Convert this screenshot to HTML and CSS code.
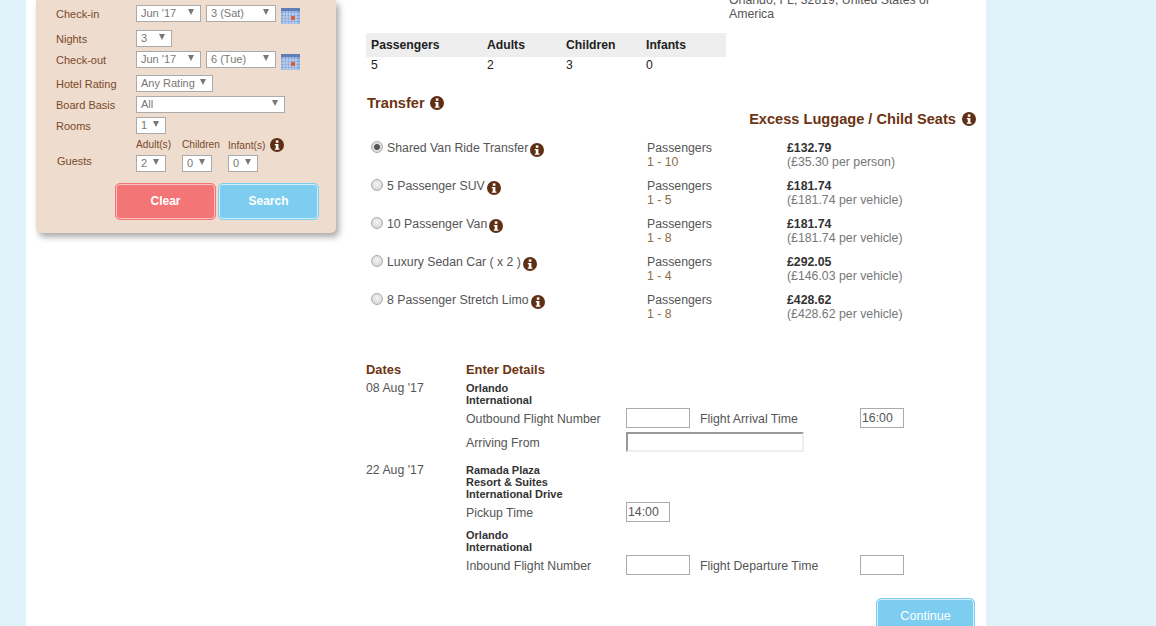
FILE: index.html
```html
<!DOCTYPE html>
<html lang="en">
<head>
  <meta charset="UTF-8">
  <title>Transfer</title>
  <link rel="stylesheet" href="styles.css">
</head>
<body>
<svg class="defs" width="0" height="0">
  <symbol id="info" viewBox="0 0 14 14">
    <circle cx="7" cy="7" r="7" fill="#5f2f14"/>
    <rect x="5.8" y="2.4" width="2.6" height="2.4" fill="#fff"/>
    <path d="M4.8 5.9h3.6v4.5h1v1.4H4.8v-1.4h1V7.3h-1z" fill="#fff"/>
  </symbol>
  <symbol id="cal" viewBox="0 0 19 16">
    <rect x="0" y="1" width="19" height="15" fill="#7f9fd8"/>
    <rect x="0" y="0" width="19" height="3" fill="#5f7fb4"/>
    <path d="M0 6h19M0 9h19M0 12h19M0 15h19M3 3v13M6 3v13M9 3v13M12 3v13M15 3v13" stroke="#c5d6ef" stroke-width="1"/>
    <rect x="10" y="8" width="4" height="4" fill="#d9603c"/>
  </symbol>
</svg>

<div class="wrap">
  <div class="side">
    <div class="panel">
      <div class="row r25">
        <label>Check-in</label>
        <span class="sel w65">Jun '17</span>
        <span class="sel w70">3 (Sat)</span>
        <svg class="cal"><use href="#cal"/></svg>
      </div>
      <div class="row r21">
        <label>Nights</label>
        <span class="sel w36">3</span>
      </div>
      <div class="row r24">
        <label>Check-out</label>
        <span class="sel w65">Jun '17</span>
        <span class="sel w70">6 (Tue)</span>
        <svg class="cal"><use href="#cal"/></svg>
      </div>
      <div class="row r21">
        <label>Hotel Rating</label>
        <span class="sel w77">Any Rating</span>
      </div>
      <div class="row r21">
        <label>Board Basis</label>
        <span class="sel w149">All</span>
      </div>
      <div class="row r21">
        <label>Rooms</label>
        <span class="sel w30">1</span>
      </div>
      <div class="guests">
        <label>Guests</label>
        <div class="guest-col">
          <small>Adult(s)</small>
          <span class="sel w30">2</span>
        </div>
        <div class="guest-col">
          <small>Children</small>
          <span class="sel w30">0</span>
        </div>
        <div class="guest-col">
          <small class="inf">Infant(s) <svg class="info i13"><use href="#info"/></svg></small>
          <span class="sel w30">0</span>
        </div>
      </div>
      <div class="btns">
        <button class="btn red">Clear</button>
        <button class="btn blue">Search</button>
      </div>
    </div>
  </div>

  <div class="main">
    <div class="top">
      <table class="pax">
        <tr><th>Passengers</th><th>Adults</th><th>Children</th><th>Infants</th></tr>
        <tr><td>5</td><td>2</td><td>3</td><td>0</td></tr>
      </table>
      <p class="addr">Orlando, FL, 32819, United States of America</p>
    </div>

    <h2 class="h-transfer">Transfer <svg class="info"><use href="#info"/></svg></h2>
    <h2 class="h-extra">Excess Luggage / Child Seats <svg class="info"><use href="#info"/></svg></h2>

    <div class="opts">
      <div class="opt">
        <div class="opt-name"><input type="radio" name="t" checked><span>Shared Van Ride Transfer</span> <svg class="info"><use href="#info"/></svg></div>
        <div class="opt-pax">Passengers<br><em>1 - 10</em></div>
        <div class="opt-price"><b>£132.79</b><br>(£35.30 per person)</div>
      </div>
      <div class="opt">
        <div class="opt-name"><input type="radio" name="t"><span>5 Passenger SUV</span> <svg class="info"><use href="#info"/></svg></div>
        <div class="opt-pax">Passengers<br><em>1 - 5</em></div>
        <div class="opt-price"><b>£181.74</b><br>(£181.74 per vehicle)</div>
      </div>
      <div class="opt">
        <div class="opt-name"><input type="radio" name="t"><span>10 Passenger Van</span> <svg class="info"><use href="#info"/></svg></div>
        <div class="opt-pax">Passengers<br><em>1 - 8</em></div>
        <div class="opt-price"><b>£181.74</b><br>(£181.74 per vehicle)</div>
      </div>
      <div class="opt">
        <div class="opt-name"><input type="radio" name="t"><span>Luxury Sedan Car ( x 2 )</span> <svg class="info"><use href="#info"/></svg></div>
        <div class="opt-pax">Passengers<br><em>1 - 4</em></div>
        <div class="opt-price"><b>£292.05</b><br>(£146.03 per vehicle)</div>
      </div>
      <div class="opt">
        <div class="opt-name"><input type="radio" name="t"><span>8 Passenger Stretch Limo</span> <svg class="info"><use href="#info"/></svg></div>
        <div class="opt-pax">Passengers<br><em>1 - 8</em></div>
        <div class="opt-price"><b>£428.62</b><br>(£428.62 per vehicle)</div>
      </div>
    </div>

    <div class="det-head"><span>Dates</span><span>Enter Details</span></div>

    <div class="det">
      <div class="det-date">08 Aug '17</div>
      <div class="det-body">
        <div class="place">Orlando<br>International</div>
        <div class="field">
          <label>Outbound Flight Number</label><input class="in64" type="text">
          <label class="second">Flight Arrival Time</label><input class="in44" type="text" value="16:00">
        </div>
        <div class="field">
          <label>Arriving From</label><input class="in178" type="text">
        </div>
      </div>
    </div>

    <div class="det det2">
      <div class="det-date">22 Aug '17</div>
      <div class="det-body">
        <div class="place">Ramada Plaza<br>Resort &amp; Suites<br>International Drive</div>
        <div class="field">
          <label>Pickup Time</label><input class="in44" type="text" value="14:00">
        </div>
        <div class="place p2">Orlando<br>International</div>
        <div class="field">
          <label>Inbound Flight Number</label><input class="in64" type="text">
          <label class="second">Flight Departure Time</label><input class="in44" type="text">
        </div>
      </div>
    </div>

    <div class="foot"><button class="btn blue cont">Continue</button></div>
  </div>
</div>
</body>
</html>
```

FILE: styles.css
```css
html, body {
  margin: 0;
  height: 626px;
  overflow: hidden;
}
body {
  background: #e0f3fb;
  font-family: "Liberation Sans", Arial, sans-serif;
  font-size: 12.3px;
  color: #555;
}
.defs {
  position: absolute;
}
.wrap {
  display: flex;
  width: 960px;
  height: 626px;
  margin-left: 26px;
  background: #fff;
}

/* search panel */
.side {
  width: 340px;
  padding-left: 10px;
  box-sizing: border-box;
}
.panel {
  width: 300px;
  height: 233px;
  padding: 5px 0 0 20px;
  box-sizing: border-box;
  background: #eedccf;
  border-radius: 0 0 5px 5px;
  box-shadow: 3px 4px 6px #aaa;
}
.row {
  display: flex;
  align-items: flex-start;
  gap: 5px;
}
.r25 { height: 25px; }
.r24 { height: 24px; }
.r21 { height: 21px; }
.panel label {
  flex: none;
  width: 75px;
  padding-top: 1px;
  line-height: 17px;
  font-size: 11px;
  color: #7a4a28;
}
.sel {
  position: relative;
  display: block;
  flex: none;
  height: 17px;
  line-height: 15px;
  padding-left: 4px;
  box-sizing: border-box;
  background: #fff;
  border: 1px solid #aaa;
  font-size: 11px;
  color: #777;
}
.sel::after {
  content: "";
  position: absolute;
  top: 3px;
  right: 6px;
  border-style: solid;
  border-width: 6px 3.5px 0;
  border-color: #777 transparent transparent;
}
.w30 { width: 30px; }
.w36 { width: 36px; }
.w65 { width: 65px; }
.w70 { width: 70px; }
.w77 { width: 77px; }
.w149 { width: 149px; }
.cal {
  width: 19px;
  height: 16px;
  margin-top: 3px;
}
.guests {
  display: flex;
  height: 45px;
}
.panel .guests label {
  width: 80px;
  padding: 15px 0 0 1px;
  box-sizing: border-box;
}
.guest-col {
  width: 46px;
}
.guest-col small {
  display: block;
  height: 17px;
  line-height: 14px;
  font-size: 10.2px;
  color: #7a4a28;
  white-space: nowrap;
}
.guest-col .inf {
  line-height: 12px;
}
.btns {
  display: flex;
  gap: 2px;
  margin-left: 59px;
}
.btn {
  width: 101px;
  height: 37px;
  padding: 0 0 2px;
  border: 1px solid;
  border-radius: 5px;
  font: bold 12px "Liberation Sans", Arial, sans-serif;
  color: #fff;
}
.red {
  background: #f37575;
  border-color: #f37575;
  box-shadow: inset 0 0 0 1px #fbc4c0;
}
.blue {
  background: #7dcdf0;
  border-color: #7dcdf0;
  box-shadow: inset 0 0 0 1px #d4effa;
}

/* main column */
.main {
  width: 620px;
  flex: none;
  position: relative;
}
.top {
  display: flex;
  height: 95px;
}
.pax {
  align-self: flex-start;
  width: 360px;
  margin-top: 33px;
  border-collapse: collapse;
  font-size: 12.2px;
  color: #222;
}
.pax th {
  height: 24px;
  padding: 0 0 0 5px;
  background: #eee;
  text-align: left;
}
.pax th:nth-child(1) { width: 111px; }
.pax th:nth-child(2) { width: 74px; }
.pax th:nth-child(3) { width: 75px; }
.pax td {
  height: 16px;
  padding: 0 0 0 5px;
}
.addr {
  width: 205px;
  margin: -7px 0 0 3px;
  line-height: 14px;
}
h2 {
  margin: 0;
  font-size: 14.6px;
  line-height: 16px;
  color: #6b3413;
}
.info {
  width: 14px;
  height: 14px;
  vertical-align: -2px;
}
.i13 {
  margin-left: 2px;
  vertical-align: -3px;
}
.h-transfer {
  padding-left: 1px;
}
.h-transfer .info {
  margin-left: 1px;
}
.h-extra .info {
  margin-left: 2px;
}
.h-extra {
  width: 610px;
  text-align: right;
}

/* transfer options */
.opts {
  margin-top: 14px;
}
.opt {
  display: flex;
  height: 38px;
  line-height: 14px;
}
.opt-name {
  display: flex;
  align-items: flex-start;
  width: 281px;
  padding-left: 5px;
  box-sizing: border-box;
}
.opt-name input {
  appearance: none;
  flex: none;
  width: 12px;
  height: 12px;
  margin: 0 4px 0 0;
  border: 1px solid #aaa;
  border-radius: 50%;
  background: radial-gradient(circle at 50% 40%, #f4f4f4, #d0d0d0);
}
.opt-name input:checked {
  background: radial-gradient(circle, #555 0, #555 2.5px, #ddd 3.5px);
}
.opt-name .info {
  margin: 2px 0 0 2px;
}
.opt-pax {
  width: 140px;
}
.opt-pax em {
  font-style: normal;
  color: #8c6d45;
}
.opt-price {
  color: #777;
}
.opt-price b {
  color: #333;
}

/* details */
.det-head {
  display: flex;
  margin-top: 32px;
  font-size: 12.9px;
  font-weight: bold;
  line-height: 14px;
  color: #6b3413;
}
.det-head span:first-child {
  width: 100px;
}
.det {
  display: flex;
  margin-top: 5px;
}
.det2 {
  margin-top: 12px;
}
.det-date {
  width: 100px;
  line-height: 12px;
}
.det-body {
  flex: 1;
}
.place {
  font-size: 11px;
  font-weight: bold;
  line-height: 12px;
  color: #333;
}
.p2 {
  margin-top: 7px;
}
.field {
  display: flex;
  align-items: center;
  height: 20px;
  margin-top: 2px;
}
.field + .field {
  margin-top: 4px;
}
.field label {
  width: 160px;
  padding-top: 2px;
}
.field .second {
  width: 160px;
  margin-left: 10px;
}
.field input {
  height: 20px;
  padding: 0 1px;
  box-sizing: border-box;
  border: 1px solid #aaa;
  font: 12.3px "Liberation Sans", Arial, sans-serif;
  color: #555;
}
.in44 { width: 44px; }
.in64 { width: 64px; }
.field .in178 {
  width: 178px;
  border-width: 2px;
  border-style: solid;
  border-color: #999 #eee #eee #999;
}
.foot {
  position: absolute;
  top: 598px;
  left: 510px;
}
.cont {
  width: 99px;
  height: 36px;
  padding: 0;
  font-weight: normal;
  font-size: 12.6px;
}
```
